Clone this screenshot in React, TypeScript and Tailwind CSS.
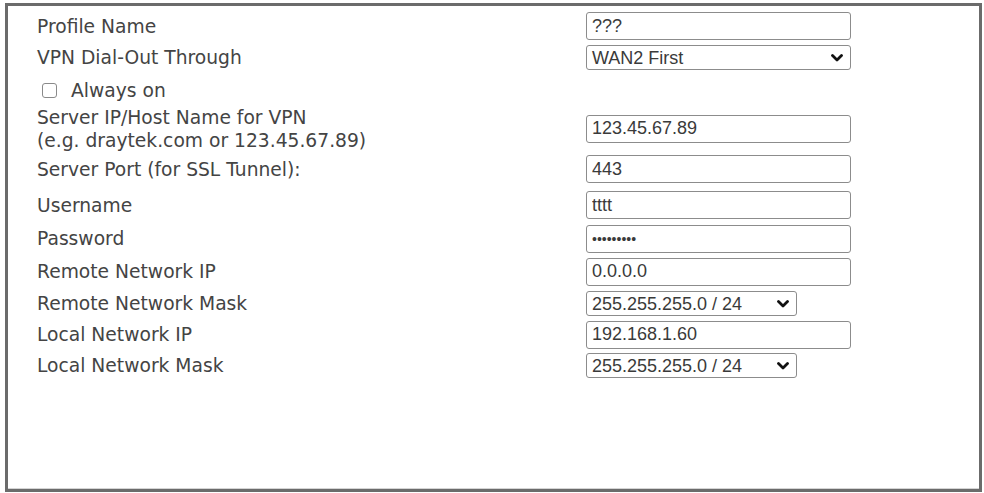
import React from "react";

const labelFont = { fontFamily: '"DejaVu Sans", Verdana, sans-serif' };
const fieldFont = { fontFamily: '"Liberation Sans", Arial, sans-serif' };

function Chevron() {
  return (
    <svg width="12" height="8" viewBox="0 0 12 8" className="shrink-0">
      <path d="M1.5 1.5 L6 6 L10.5 1.5" fill="none" stroke="#111" strokeWidth="2.8" strokeLinecap="round" strokeLinejoin="round" />
    </svg>
  );
}

function TextBox({ value, type = "text" }: { value: string; type?: string }) {
  return (
    <input
      type={type}
      value={value}
      readOnly
      style={fieldFont}
      className={`h-[28px] w-[265px] rounded-[3px] border border-[#8c8c8c] bg-white px-[5px] text-[#3a3a3a] outline-none ${type === "password" ? "text-[14px]" : "text-[18px]"}`}
    />
  );
}

function SelectBox({ value, wide }: { value: string; wide?: boolean }) {
  return (
    <div
      style={fieldFont}
      className={`flex h-[25px] items-center justify-between rounded-[3px] border border-[#8c8c8c] bg-white pl-[5px] pr-[7px] text-[18px] text-[#3a3a3a] ${wide ? "w-[265px]" : "w-[211px]"}`}
    >
      <span className="leading-none">{value}</span>
      <Chevron />
    </div>
  );
}

function Row({ h, label, children }: { h: string; label: React.ReactNode; children?: React.ReactNode }) {
  return (
    <div className={`flex items-center ${h}`}>
      <div style={labelFont} className="w-[549px] text-[18.7px] leading-[23px] text-[#444]">
        {label}
      </div>
      <div>{children}</div>
    </div>
  );
}

export default function App() {
  return (
    <div className="h-[493px] w-[984px] overflow-hidden bg-white">
      <div className="ml-[5px] mt-[3px] h-[489px] w-[977px] border-[3px] border-[#6b6b6b] bg-white">
        <div className="h-full border-b border-[#d4d4d4] pl-[29px] pt-[4px]">
          <Row h="h-[32px]" label="Profile Name">
            <TextBox value="???" />
          </Row>
          <Row h="h-[31px]" label="VPN Dial-Out Through">
            <SelectBox value="WAN2 First" wide />
          </Row>
          <Row
            h="h-[34px]"
            label={
              <span className="flex items-center gap-[14px] pl-[5px]">
                <span className="inline-block h-[15px] w-[15px] rounded-[3px] border border-[#8a8a8a] bg-white" />
                Always on
              </span>
            }
          />
          <Row
            h="h-[43px]"
            label={
              <>
                Server IP/Host Name for VPN
                <br />
                (e.g. draytek.com or 123.45.67.89)
              </>
            }
          >
            <TextBox value="123.45.67.89" />
          </Row>
          <Row h="h-[38px]" label="Server Port (for SSL Tunnel):">
            <TextBox value="443" />
          </Row>
          <Row h="h-[34px]" label="Username">
            <TextBox value="tttt" />
          </Row>
          <Row h="h-[33px]" label="Password">
            <TextBox value="123456789" type="password" />
          </Row>
          <Row h="h-[33px]" label="Remote Network IP">
            <TextBox value="0.0.0.0" />
          </Row>
          <Row h="h-[31px]" label="Remote Network Mask">
            <SelectBox value="255.255.255.0 / 24" />
          </Row>
          <Row h="h-[31px]" label="Local Network IP">
            <TextBox value="192.168.1.60" />
          </Row>
          <Row h="h-[31px]" label="Local Network Mask">
            <SelectBox value="255.255.255.0 / 24" />
          </Row>
        </div>
      </div>
    </div>
  );
}
